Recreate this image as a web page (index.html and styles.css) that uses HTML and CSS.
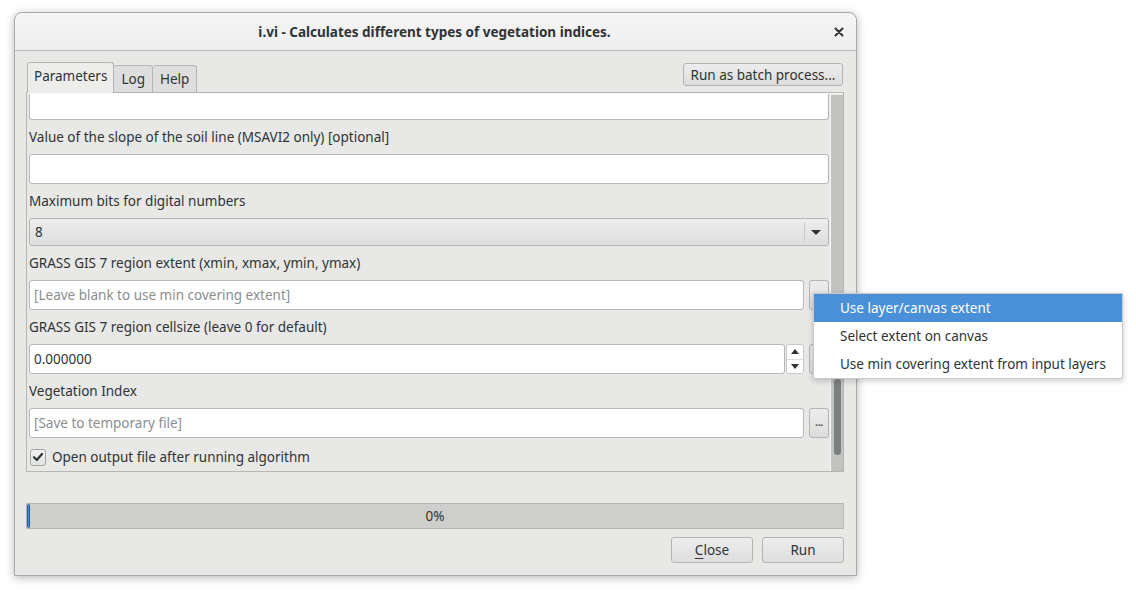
FILE: index.html
```html
<!DOCTYPE html>
<html>
<head>
<meta charset="utf-8">
<link rel="stylesheet" href="styles.css">
</head>
<body>
<div class="window">
  <div class="titlebar">
    <span class="title">i.vi - Calculates different types of vegetation indices.</span>
    <span class="close-x">
      <svg width="10" height="10" viewBox="0 0 10 10"><path d="M1.5 1.5 L8.5 8.5 M8.5 1.5 L1.5 8.5" stroke="#2e3436" stroke-width="2" stroke-linecap="round"/></svg>
    </span>
  </div>
  <div class="content">
    <div class="tabbar">
      <div class="tabs">
        <div class="tab active">Parameters</div>
        <div class="tab">Log</div>
        <div class="tab">Help</div>
      </div>
      <button class="btn batch">Run as batch process...</button>
    </div>
    <div class="pane">
      <div class="scroll">
        <div class="fields">
          <div class="input partial"></div>
          <div class="label">Value of the slope of the soil line (MSAVI2 only) [optional]</div>
          <div class="input"></div>
          <div class="label">Maximum bits for digital numbers</div>
          <div class="combo">
            <span class="combo-text">8</span>
            <span class="combo-sep"></span>
            <span class="combo-arrow"></span>
          </div>
          <div class="label">GRASS GIS 7 region extent (xmin, xmax, ymin, ymax)</div>
          <div class="row">
            <div class="input grow placeholder">[Leave blank to use min covering extent]</div>
            <div class="dots"></div>
          </div>
          <div class="label">GRASS GIS 7 region cellsize (leave 0 for default)</div>
          <div class="row">
            <div class="spin">
              <div class="spin-text">0.000000</div>
              <div class="spin-btns">
                <div class="spin-up"><span class="tri-up"></span></div>
                <div class="spin-down"><span class="tri-down"></span></div>
              </div>
            </div>
            <div class="dots"></div>
          </div>
          <div class="label">Vegetation Index</div>
          <div class="row">
            <div class="input grow placeholder">[Save to temporary file]</div>
            <div class="dots">...</div>
          </div>
          <div class="check-row">
            <span class="checkbox">
              <svg width="12" height="12" viewBox="0 0 12 12"><path d="M2 6.2 L4.8 9 L10 3" fill="none" stroke="#2e3436" stroke-width="2.2" stroke-linecap="round" stroke-linejoin="round"/></svg>
            </span>
            <span class="check-label">Open output file after running algorithm</span>
          </div>
        </div>
        <div class="scrollbar"><div class="thumb"></div></div>
      </div>
    </div>
    <div class="progress">
      <div class="progress-fill"></div>
      <span class="progress-text">0%</span>
    </div>
    <div class="actions">
      <button class="btn action"><u>C</u>lose</button>
      <button class="btn action">Run</button>
    </div>
  </div>
</div>
<div class="menu">
  <div class="menu-item selected">Use layer/canvas extent</div>
  <div class="menu-item">Select extent on canvas</div>
  <div class="menu-item">Use min covering extent from input layers</div>
</div>
</body>
</html>
```
FILE: styles.css
```css
* { box-sizing: border-box; }
html, body { margin: 0; padding: 0; background: #ffffff; }
body {
  font-family: "Noto Sans", "Open Sans", sans-serif;
  font-size: 13.5px;
  color: #2e3436;
  width: 1136px;
  height: 590px;
  overflow: hidden;
  position: relative;
}
.window {
  margin: 12px 0 0 14px;
  width: 843px;
  height: 564px;
  background: #e8e8e7;
  border: 1px solid #a8a8a8;
  border-radius: 8px 8px 0 0;
  box-shadow: 0 2px 10px rgba(0,0,0,0.28);
  display: flex;
  flex-direction: column;
}
.titlebar {
  height: 38px;
  flex: none;
  background: linear-gradient(#f5f5f5, #eeeeee);
  border-bottom: 1px solid #bdbdbd;
  border-radius: 8px 8px 0 0;
  display: flex;
  align-items: center;
  justify-content: center;
  position: relative;
}
.title {
  font-weight: bold;
  font-size: 13.5px;
  color: #2e3436;
  margin-left: -2px;
}
.close-x {
  position: absolute;
  right: 12px;
  top: 14px;
  width: 10px;
  height: 10px;
  display: flex;
}
.content {
  flex: 1;
  padding: 11px 12px 12px 11px;
  display: flex;
  flex-direction: column;
}
.tabbar {
  display: flex;
  justify-content: space-between;
  align-items: flex-start;
  height: 30px;
  flex: none;
}
.tabs { display: flex; align-items: flex-end; height: 30px; padding-left: 1px; }
.tab {
  height: 27px;
  padding: 0 7px;
  display: flex;
  align-items: center;
  background: #dedede;
  border: 1px solid #b6b6b3;
  border-bottom: none;
  border-left: none;
  border-radius: 3px 3px 0 0;
  color: #2e3436;
}
.tab.active {
  height: 31px;
  margin-bottom: -1px;
  background: #ededec;
  border-left: 1px solid #b6b6b3;
  padding: 0 6px 4px 6px;
  position: relative;
  z-index: 2;
}
.btn {
  font-family: inherit;
  font-size: 13.5px;
  color: #2e3436;
  background: linear-gradient(#ededed, #dddddd);
  border: 1px solid #b4b4b1;
  border-radius: 3px;
  padding: 0;
  display: flex;
  align-items: center;
  justify-content: center;
}
.batch {
  width: 160px;
  height: 23px;
  margin-top: 1px;
  margin-right: 1px;
}
.pane {
  height: 380px;
  flex: none;
  border: 1px solid #b6b6b3;
  background: #e8e8e7;
  position: relative;
  z-index: 1;
}
.scroll {
  display: flex;
  height: 100%;
  border-top: 1px solid #fbfbfb;
}
.fields {
  flex: 1;
  padding: 0 1px 0 2px;
  display: flex;
  flex-direction: column;
}
.label {
  height: 20px;
  line-height: 20px;
  margin: 7px 0;
  white-space: nowrap;
  padding-left: 0;
}
.input {
  height: 30px;
  background: #ffffff;
  border: 1px solid #b8b8b6;
  border-radius: 3px;
  padding: 0 4px;
  display: flex;
  align-items: center;
  white-space: nowrap;
}
.input.partial {
  height: 26px;
  border-top: none;
  border-radius: 0 0 3px 3px;
}
.placeholder { color: #8b8e8f; }
.grow { flex: 1; }
.row { display: flex; gap: 5px; }
.dots {
  width: 20px;
  height: 30px;
  flex: none;
  border: 1px solid #b4b4b1;
  border-radius: 3px;
  background: linear-gradient(#ededed, #dcdcdc);
  font-size: 11px;
  font-weight: bold;
  letter-spacing: -0.5px;
  color: #555;
  display: flex;
  align-items: center;
  justify-content: center;
  padding-bottom: 4px;
}
.combo {
  height: 28px;
  border: 1px solid #b4b4b1;
  border-radius: 3px;
  background: linear-gradient(#ededed, #dedede);
  display: flex;
  align-items: center;
  padding-left: 5px;
}
.combo-text { flex: 1; }
.combo-sep {
  width: 1px;
  height: 20px;
  background: #c8c8c6;
  margin-right: 6px;
}
.combo-arrow {
  width: 0;
  height: 0;
  border-left: 5px solid transparent;
  border-right: 5px solid transparent;
  border-top: 5px solid #2e3436;
  margin-right: 7px;
}
.spin {
  flex: 1;
  display: flex;
  height: 30px;
}
.spin-text {
  flex: 1;
  background: #ffffff;
  border: 1px solid #b8b8b6;
  border-radius: 3px;
  padding: 0 4px;
  display: flex;
  align-items: center;
}
.spin-btns {
  width: 18px;
  display: flex;
  flex-direction: column;
  background: #ffffff;
  border: 1px solid #c8c8c6;
  border-radius: 3px;
  margin-left: 1px;
}
.spin-up, .spin-down {
  flex: 1;
  display: flex;
  align-items: center;
  justify-content: center;
}
.spin-up { border-bottom: 1px solid #dedede; }
.tri-up, .tri-down {
  width: 0; height: 0;
  border-left: 4px solid transparent;
  border-right: 4px solid transparent;
}
.tri-up { border-bottom: 5px solid #2e3436; }
.tri-down { border-top: 5px solid #2e3436; }
.check-row {
  display: flex;
  align-items: center;
  height: 20px;
  margin-top: 9px;
  padding-left: 1px;
  gap: 6px;
}
.checkbox {
  width: 16px;
  height: 17px;
  border: 1px solid #a4a4a2;
  border-radius: 3px;
  background: linear-gradient(#f2f2f2, #e2e2e2);
  display: flex;
  align-items: center;
  justify-content: center;
}
.scrollbar {
  width: 13px;
  flex: none;
  background: #c2c3c1;
  border-left: 1px solid #f6f6f6;
  position: relative;
  margin-top: 1px;
}
.thumb {
  position: absolute;
  left: 3px;
  width: 7px;
  bottom: 16px;
  height: 76px;
  background: #7b7f80;
  border-radius: 4px;
}
.progress {
  margin-top: 31px;
  height: 26px;
  flex: none;
  border: 1px solid #b6b6b3;
  background: #cececd;
  position: relative;
  display: flex;
  align-items: center;
  justify-content: center;
}
.progress-fill {
  position: absolute;
  left: 0;
  top: 0;
  bottom: 0;
  width: 3px;
  background: #4a90d9;
  border: 1px solid #215d9c;
  border-radius: 2px;
}
.progress-text { color: #2e3436; }
.actions {
  display: flex;
  justify-content: flex-end;
  gap: 9px;
  margin-top: 8px;
}
.action {
  width: 82px;
  height: 26px;
}
.action u { text-decoration-thickness: 1px; text-underline-offset: 3px; }
.menu {
  position: absolute;
  z-index: 10;
  left: 813px;
  top: 293px;
  width: 310px;
  background: #ffffff;
  border: 1px solid #c9c9c9;
  box-shadow: 0 2px 6px rgba(0,0,0,0.2);
  padding: 0;
}
.menu-item {
  height: 28px;
  line-height: 28px;
  padding-left: 26px;
  white-space: nowrap;
  color: #2e3436;
}
.menu-item.selected {
  background: #4a90d9;
  color: #ffffff;
}
```
